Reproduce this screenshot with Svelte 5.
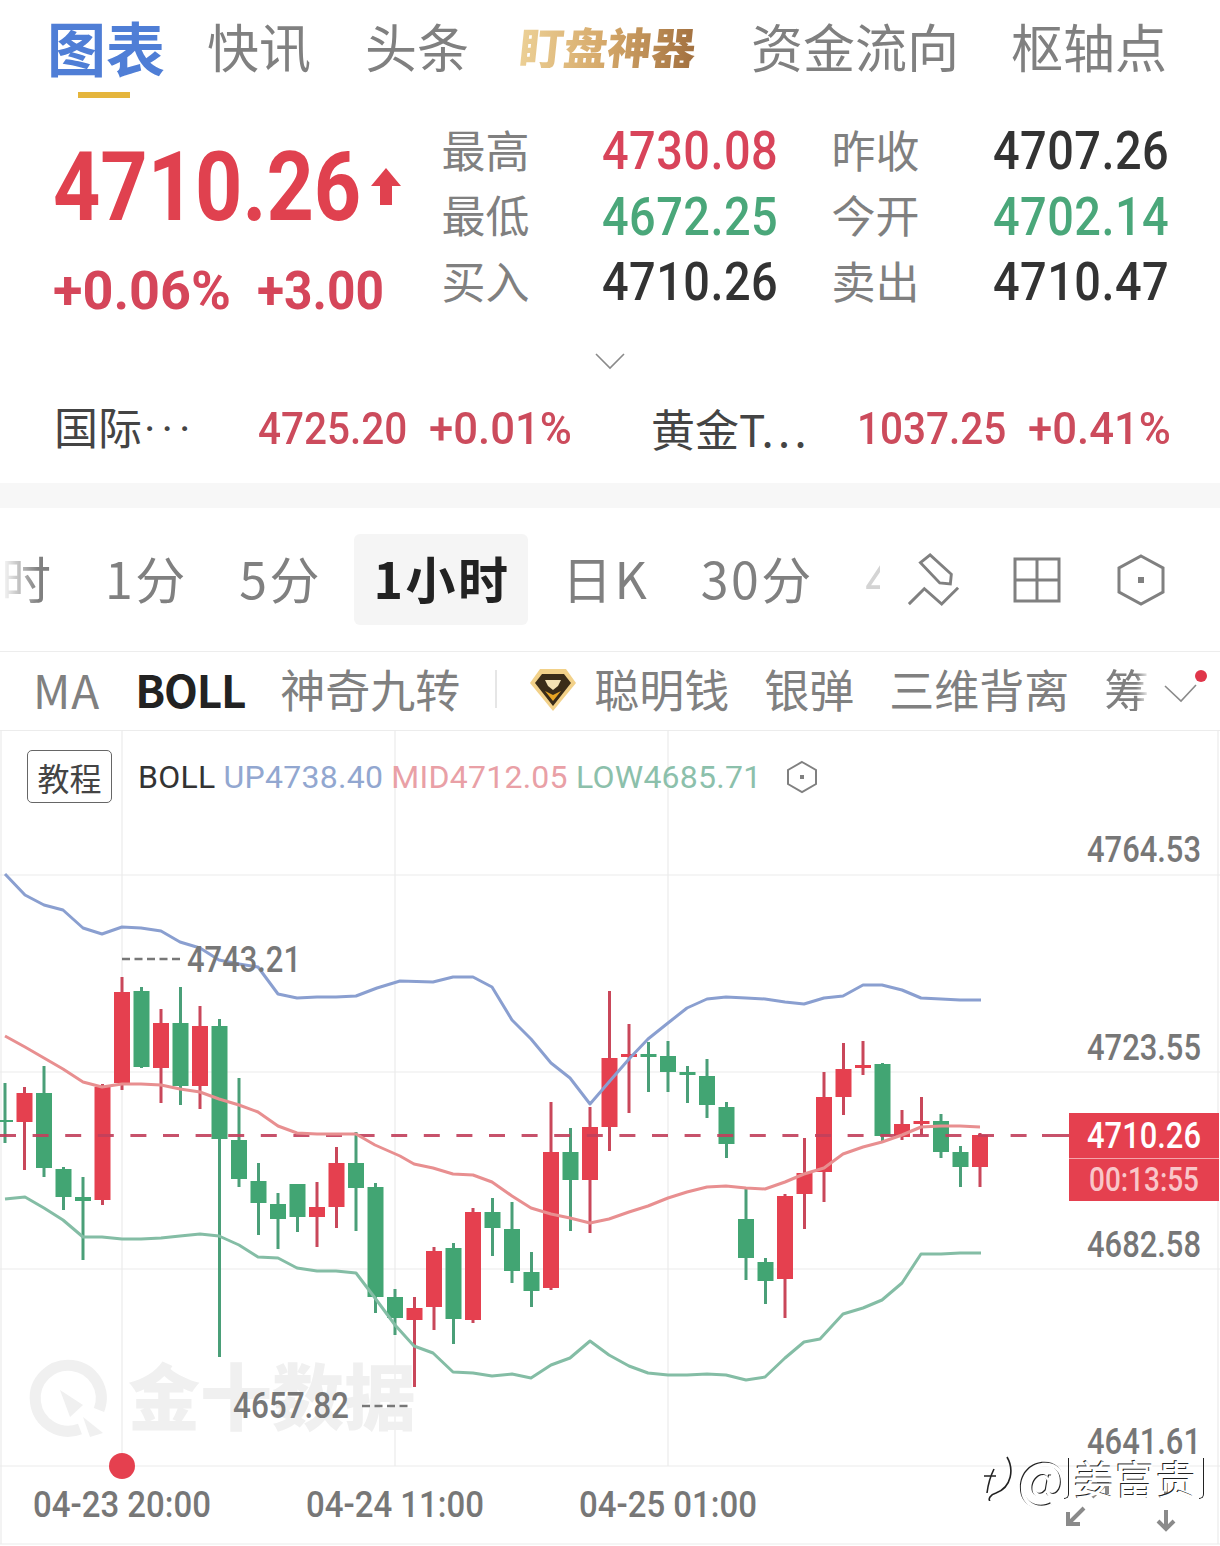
<script>
	// [color, wickTop, bodyTop, bodyBottom, wickBottom]
	const raw = [
		['g',1083,1120,1122,1143],['r',1087,1093,1122,1170],['g',1066,1093,1168,1177],['g',1167,1169,1197,1210],
		['g',1177,1197,1201,1260],['r',1084,1087,1200,1205],['r',977,992,1083,1090],['g',987,991,1067,1068],
		['r',1009,1023,1068,1103],['g',987,1023,1086,1105],['r',1006,1026,1086,1109],['g',1019,1026,1139,1357],
		['g',1078,1140,1179,1187],['g',1163,1181,1203,1235],['g',1193,1204,1219,1249],['g',1184,1184,1217,1232],
		['r',1182,1207,1217,1247],['r',1147,1163,1207,1228],['g',1132,1163,1188,1231],['g',1183,1187,1297,1313],
		['g',1289,1297,1318,1335],['r',1297,1308,1320,1387],['r',1247,1251,1307,1330],['g',1243,1248,1319,1344],
		['r',1208,1212,1320,1323],['g',1198,1212,1228,1256],['g',1202,1229,1271,1283],['g',1252,1272,1291,1307],
		['r',1102,1152,1288,1290],['g',1128,1152,1180,1231],['r',1107,1127,1180,1233],['r',991,1058,1127,1151],
		['r',1024,1054,1057,1113],['g',1042,1054,1057,1092],['g',1041,1056,1072,1092],['g',1066,1072,1075,1103],
		['g',1059,1076,1105,1118],['g',1102,1107,1144,1158],['g',1187,1219,1258,1280],['g',1258,1262,1281,1304],
		['r',1194,1196,1279,1318],['r',1138,1173,1194,1229],['r',1072,1097,1172,1202],['r',1043,1069,1097,1115],
		['r',1041,1065,1068,1075],['g',1063,1064,1136,1143],['r',1110,1124,1137,1140],['r',1097,1121,1124,1135],
		['g',1114,1121,1152,1158],['g',1146,1152,1167,1187],['r',1133,1135,1167,1187]
	];
	const candles = raw.map(([c, wt, bt, bb, wb], i) => ({ c, wt, bt, bb, wb, x: 5 + i * 19.5 }));

	const up = '5,874 25,895 44,905 63,910 83,928 102,934 122,927 141,928 161,931 180,942 200,948 219,960 239,964 258,967 278,994 297,998 317,997 336,997 356,996 377,988 400,981 433,982 453,977 473,977 492,987 512,1020 531,1039 551,1063 570,1078 590,1104 609,1082 629,1059 648,1039 668,1023 687,1008 707,999 726,997 746,998 765,999 785,1002 804,1004 824,998 843,996 863,985 882,985 902,990 921,998 941,999 960,1000 981,1000';
	const mid = '5,1036 25,1047 44,1058 63,1069 83,1082 102,1087 122,1084 141,1084 161,1085 180,1089 200,1092 219,1099 239,1105 258,1112 278,1126 297,1133 317,1134 336,1134 356,1134 375,1145 400,1156 414,1164 433,1168 453,1174 473,1175 492,1182 512,1196 531,1208 551,1214 570,1218 590,1223 609,1219 629,1212 648,1206 668,1198 687,1192 707,1187 726,1186 746,1188 765,1189 785,1182 804,1174 824,1168 843,1154 863,1147 882,1142 902,1135 921,1127 941,1126 960,1126 980,1127';
	const low = '5,1199 25,1197 44,1208 63,1220 83,1237 102,1237 122,1239 141,1239 161,1238 180,1236 200,1234 219,1236 239,1245 258,1257 278,1258 297,1268 317,1271 336,1271 356,1273 375,1298 395,1325 414,1346 433,1353 453,1372 473,1373 492,1376 512,1374 531,1378 551,1365 570,1358 590,1341 609,1355 629,1366 648,1373 668,1375 687,1375 707,1374 726,1375 746,1380 765,1377 785,1358 804,1342 820,1339 843,1314 863,1308 882,1300 902,1283 921,1254 941,1254 960,1253 981,1253';

	const axis = [[849, '4764.53'], [1047, '4723.55'], [1244, '4682.58'], [1441, '4641.61']];
	const dates = [[33, '04-23 20:00'], [306, '04-24 11:00'], [579, '04-25 01:00']];
</script>

<div class="page">
	<nav class="tabs">
		<span class="tab active">图表</span>
		<span class="tab">快讯</span>
		<span class="tab">头条</span>
		<span class="tab gold">盯盘神器</span>
		<span class="tab">资金流向</span>
		<span class="tab pivot">枢轴点</span>
	</nav>

	<section class="quote">
		<div class="headline">
			<div class="price">
				<span class="num big">4710.26</span>
				<svg width="32" height="38" viewBox="0 0 32 38"><path d="M16 0 31 18H22V37H10V18H1Z" fill="#e0414f" /></svg>
			</div>
			<div class="delta">
				<span class="num pct">+0.06%</span>
				<span class="num chg">+3.00</span>
			</div>
		</div>
		<div class="stats">
			<span class="lbl">最高</span><span class="val num red">4730.08</span><span class="lbl">昨收</span><span class="val num">4707.26</span>
			<span class="lbl">最低</span><span class="val num green">4672.25</span><span class="lbl">今开</span><span class="val num green">4702.14</span>
			<span class="lbl">买入</span><span class="val num">4710.26</span><span class="lbl">卖出</span><span class="val num">4710.47</span>
		</div>
	</section>

	<div class="more">
		<svg width="32" height="20" viewBox="0 0 32 20"><path d="M2 3 16 17 30 3" fill="none" stroke="#8a8a8a" stroke-width="1.6" /></svg>
	</div>

	<section class="related">
		<span class="r-name">国际<span class="dots">···</span></span>
		<span class="r-price num">4725.20</span>
		<span class="r-pct num">+0.01%</span>
		<span class="r-name second">黄金T…</span>
		<span class="r-price num">1037.25</span>
		<span class="r-pct num">+0.41%</span>
	</section>

	<div class="band"></div>

	<div class="periods">
		<span class="fade-l">时</span>
		<span>1分</span>
		<span>5分</span>
		<span class="on">1小时</span>
		<span>日K</span>
		<span>30分</span>
		<span class="fade-four">4</span>
		<div class="tools">
			<svg width="54" height="56" viewBox="906 551 56 56" fill="none" stroke="#808080" stroke-width="3">
				<path d="M921 561 931 553 953 573 952 583 941 582Z" />
				<path d="M909 604 925 588 943 604 960 587" />
			</svg>
			<svg width="48" height="46" viewBox="0 0 48 46" fill="none" stroke="#808080" stroke-width="3">
				<rect x="2" y="2" width="44" height="42" />
				<path d="M24 2V44M2 23H46" />
			</svg>
			<svg class="hex" width="48" height="52" viewBox="0 0 48 52" fill="none" stroke="#808080" stroke-width="3">
				<path d="M24 2 46 14V38L24 50 2 38V14Z" />
				<rect x="21" y="23" width="6" height="6" fill="#808080" stroke="none" />
			</svg>
		</div>
	</div>

	<div class="indicators">
		<span class="ma">MA</span>
		<span class="boll">BOLL</span>
		<span>神奇九转</span>
		<i class="sep"></i>
		<span class="smart">
			<svg width="48" height="48" viewBox="0 0 48 48">
				<path d="M11 4H37L47 18 24 46 1 18Z" fill="#f2d189" />
				<path d="M13 9H35L42 18 24 41 6 18Z" fill="#3a2c18" />
				<path d="M24 36 32 26 24 30 16 26Z" fill="#e7a524" />
				<path d="M16 15H32L29 21 24 25 19 21Z" fill="#f5e3b5" />
			</svg>
			聪明钱
		</span>
		<span>银弹</span>
		<span>三维背离</span>
		<span class="fade-r">筹</span>
		<svg class="expand" width="46" height="40" viewBox="0 0 46 40">
			<path d="M2 18 18 33 33 17" fill="none" stroke="#8a8a8a" stroke-width="1.6" />
			<circle cx="38" cy="8" r="6" fill="#e0364a" />
		</svg>
	</div>

	<div class="chart">
		<svg class="plot" width="1220" height="816" viewBox="0 730 1220 816">
			<g class="grid">
				<path d="M0 730.5H1220M0 875H1220M0 1072H1220M0 1269H1220M0 1466H1220M0 1544H1220" />
				<path d="M1 730V1544M122 730V1466M395 730V1466M668 730V1466M1218 730V1544" />
			</g>

			<g class="mark">
				<path d="M80 1429A33 33 0 1 1 99 1410" fill="none" stroke="#f0f0f0" stroke-width="11" />
				<path d="M60 1390 83 1405 70 1417Z M83 1417 103 1433 90 1437Z" fill="#f0f0f0" />
				<text x="128" y="1424">金十数据</text>
			</g>

			{#each candles as k}
				<g class={k.c === 'r' ? 'up' : 'down'}>
					<rect x={k.x - 1.5} y={k.wt} width="3" height={k.wb - k.wt} />
					<rect x={k.x - 8} y={k.bt} width="16" height={k.bb - k.bt} />
				</g>
			{/each}

			<path class="last" d="M0 1135.5H1043" />
			<path class="last solid" d="M1042 1135.5H1069" />

			<polyline class="l-up" points={up} />
			<polyline class="l-mid" points={mid} />
			<polyline class="l-low" points={low} />

			<path class="hl" d="M122 959H183M362 1406H408" />
			<text class="ax" x="187" y="972" textLength="114" lengthAdjust="spacingAndGlyphs">4743.21</text>
			<text class="ax" x="233" y="1418" textLength="116" lengthAdjust="spacingAndGlyphs">4657.82</text>

			{#each axis as [y, t]}
				<text class="ax" x="1087" y={y + 13} textLength="114" lengthAdjust="spacingAndGlyphs">{t}</text>
			{/each}

			{#each dates as [x, t]}
				<text class="ax date" {x} y="1517" textLength="178" lengthAdjust="spacingAndGlyphs">{t}</text>
			{/each}

			<circle cx="122" cy="1466" r="13" fill="#e5404f" />

			<rect x="1069" y="1113" width="150" height="88" fill="#e5404f" />
			<path d="M1069 1158.5H1219" stroke="#f4a5ab" stroke-width="1" />
			<text class="tag" x="1087" y="1148" textLength="114" lengthAdjust="spacingAndGlyphs">4710.26</text>
			<text class="tag dim" x="1089" y="1191" textLength="110" lengthAdjust="spacingAndGlyphs">00:13:55</text>

			<g fill="none" stroke="#8a8a8a" stroke-width="4">
				<path d="M1084 1508 1068 1524M1068 1512V1524H1080" />
				<path d="M1166 1510V1529M1158 1521 1166 1529 1174 1521" />
				<path d="M1092 1497 1106 1484M1097 1484H1107V1494M1166 1483V1494" />
			</g>
		</svg>

		<div class="legend">
			<span class="howto">教程</span>
			<span class="vals">
				<span>BOLL</span> <span class="c-up">UP4738.40</span> <span class="c-mid">MID4712.05</span> <span class="c-low">LOW4685.71</span>
			</span>
			<svg width="32" height="34" viewBox="0 0 32 34" fill="none" stroke="#808080" stroke-width="2">
				<path d="M16 2 30 10V24L16 32 2 24V10Z" />
				<rect x="14" y="15" width="4" height="4" fill="#808080" stroke="none" />
			</svg>
		</div>

		<div class="stamp">
			<svg width="36" height="46" viewBox="0 0 36 46" fill="none" stroke="#222" stroke-width="1.6">
				<path d="M27 2C34 14 32 32 16 38 10 40 8 44 10 46M14 14C10 22 8 30 7 38M4 21H16" />
			</svg>
			<span class="at">@</span>
			<span class="name">姜富贵</span>
		</div>
	</div>
</div>

<style>
	:global(body) { margin: 0; background: #fff; }

	.page {
		width: 1220px;
		height: 1546px;
		overflow: hidden;
		font-family: "Noto Sans CJK SC", "Noto Sans", sans-serif;
		color: #808080;
	}

	/* no DIN around, so Roboto gets squeezed to the same widths */
	.num {
		display: inline-block;
		flex: none;
		font-family: Roboto, sans-serif;
		font-weight: 500;
		white-space: nowrap;
		transform-origin: left center;
	}

	.tabs {
		height: 108px;
		box-sizing: border-box;
		padding: 0 0 16px 47px;
		display: flex;
		align-items: center;
		gap: 54px;
	}

	.tab { font-size: 52px; line-height: 1; white-space: nowrap; }

	.active {
		position: relative;
		margin-right: -12px;
		font-size: 59px;
		font-weight: 700;
		color: #4f7ed6;
	}

	.active::after {
		content: "";
		position: absolute;
		left: 31px;
		bottom: -22px;
		width: 52px;
		height: 6px;
		background: #e5b53c;
	}

	.gold {
		margin: 0 1px 0 -3px;
		font-size: 44px;
		font-weight: 900;
		background: linear-gradient(90deg, #ecd096, #d7ab6c 45%, #a2703f);
		-webkit-background-clip: text;
		background-clip: text;
		color: transparent;
		transform: skewX(-6deg);
	}

	.pivot { margin-left: -2px; }

	.quote {
		display: flex;
		height: 208px;
		padding: 11px 0 0 53px;
	}

	.headline { width: 390px; }

	.price {
		height: 136px;
		display: flex;
		align-items: center;
	}

	.big {
		width: 317px;
		font-size: 96px;
		font-weight: 700;
		line-height: 1;
		color: #e0414f;
		transform: scaleX(.86);
	}

	.delta {
		display: flex;
		margin-top: 4px;
		font-size: 54px;
		line-height: 64px;
		color: #d5465a;
	}

	.delta .num { font-weight: 700; }
	.pct { width: 204px; }
	.chg { transform: scaleX(.92); }

	.stats {
		display: grid;
		grid-template-columns: 159px 231px 160px auto;
		grid-auto-rows: 65.5px;
		align-items: center;
	}

	.lbl { margin-left: -1.5px; font-size: 44px; line-height: 1; padding-bottom: 6px; }

	.val {
		font-size: 53px;
		line-height: 1;
		letter-spacing: .5px;
		color: #333;
		transform: scaleX(.885);
	}

	.red { color: #d8445a; }
	.green { color: #4aa77a; }

	.more {
		height: 40px;
		margin-top: 14px;
		display: flex;
		justify-content: center;
		align-items: center;
	}

	.related {
		height: 102px;
		box-sizing: border-box;
		padding: 0 0 8px 54px;
		display: flex;
		align-items: center;
	}

	.r-name {
		flex: none;
		width: 204px;
		font-size: 44px;
		line-height: 1;
		white-space: nowrap;
		color: #444;
	}

	.r-name.second { width: 206px; }

	.dots { margin-left: 2px; font-family: Roboto, sans-serif; letter-spacing: 6px; }

	.r-price, .r-pct {
		font-size: 45px;
		line-height: 1;
		color: #cc4b5c;
	}

	.r-price { width: 171px; transform: scaleX(.9); }
	.r-pct { width: 222px; transform: scaleX(.97); }

	.band { height: 25px; background: #f7f7f7; }

	.periods {
		height: 144px;
		box-sizing: border-box;
		padding: 0 56px 0 1px;
		border-bottom: 1px solid #ededed;
		display: flex;
		align-items: center;
		gap: 51.5px;
		font-size: 50px;
		line-height: 1;
		letter-spacing: 2.5px;
		white-space: nowrap;
	}

	.periods > span { flex: none; padding-bottom: 6px; }

	.periods > .on {
		margin: 0 -17px 0 -20px;
		padding: 18px 17px 23px 20px;
		border-radius: 6px;
		background: #f5f5f5;
		font-weight: 700;
		color: #222;
	}

	.fade-l {
		-webkit-mask-image: linear-gradient(90deg, transparent, #000 70%);
		mask-image: linear-gradient(90deg, transparent, #000 70%);
	}

	.fade-four {
		width: 15px;
		margin-right: -26px;
		overflow: hidden;
		color: #d4d4d4;
	}

	.tools {
		margin-left: auto;
		display: flex;
		align-items: center;
		gap: 53px;
	}

	.tools svg { display: block; }
	.tools .hex { margin-left: 3px; }

	.indicators {
		height: 78px;
		box-sizing: border-box;
		padding: 0 0 5px 33px;
		display: flex;
		align-items: center;
		gap: 35px;
		font-size: 45px;
		line-height: 1;
		white-space: nowrap;
		position: relative;
	}

	.ma { font-size: 46px; letter-spacing: 1px; }

	.boll { font-size: 44px; font-weight: 700; letter-spacing: -1.2px; color: #222; }

	.sep { width: 2px; height: 38px; background: #e6e6e6; }

	.smart { display: flex; align-items: center; gap: 17px; margin-left: -3px; }

	.fade-r {
		width: 46px;
		-webkit-mask-image: linear-gradient(90deg, #000 70%, transparent);
		mask-image: linear-gradient(90deg, #000 70%, transparent);
	}

	.expand { position: absolute; left: 1163px; top: 16px; }

	.chart { position: relative; height: 816px; }

	.plot { display: block; }

	.grid { fill: none; stroke: #ececec; stroke-width: 1.2; }

	.mark text {
		font-size: 72px;
		font-weight: 900;
		fill: #f0f0f0;
	}

	.up rect { fill: #e5404f; }
	.up rect:first-child { fill: #c9475a; }
	.down rect { fill: #42a573; }
	.down rect:first-child { fill: #4a9f78; }

	.last {
		stroke: #c2405c;
		stroke-width: 3;
		stroke-dasharray: 16 16.6;
		opacity: .9;
	}

	.last.solid { stroke-dasharray: none; }

	polyline { fill: none; stroke-width: 3; stroke-linejoin: round; }

	.l-up { stroke: #8a9fd0; }
	.l-mid { stroke: #e88f90; }
	.l-low { stroke: #84bda5; }

	.hl { stroke: #777; stroke-width: 2.4; stroke-dasharray: 8 4.5; }

	.ax {
		font-family: Roboto, sans-serif;
		font-size: 36px;
		font-weight: 500;
		fill: #777;
	}

	.tag {
		font-family: Roboto, sans-serif;
		font-size: 37px;
		font-weight: 500;
		fill: #fff;
	}

	.tag.dim { font-size: 34px; fill: #f9c6c9; }

	.legend {
		position: absolute;
		left: 27px;
		top: 20px;
		display: flex;
		align-items: center;
	}

	.howto {
		width: 83px;
		height: 51px;
		border: 1px solid #666;
		border-radius: 5px;
		display: flex;
		align-items: center;
		justify-content: center;
		font-size: 32px;
		line-height: 1;
		color: #444;
	}

	.vals {
		margin: 0 25px 0 26px;
		font-family: Roboto, sans-serif;
		font-size: 32px;
		line-height: 1;
		letter-spacing: .25px;
		white-space: nowrap;
		color: #333;
	}

	.legend svg { display: block; }

	.c-up { color: #92a7d0; }
	.c-mid { color: #e9a0a6; }
	.c-low { color: #8cc0ab; }

	.stamp {
		position: absolute;
		left: 980px;
		top: 722px;
		display: flex;
		align-items: center;
		line-height: 1;
		white-space: nowrap;
		color: #fff;
		text-shadow: -1px -1px 0 #222;
	}

	.at { margin-left: 2px; font-size: 52px; }

	.name {
		position: relative;
		margin-left: 3px;
		padding: 0 5px 0 4px;
		font-size: 40px;
		letter-spacing: 1px;
	}

	.name::before, .name::after {
		content: "";
		position: absolute;
		top: 0;
		width: 4px;
		height: 40px;
		border-right: 1.5px solid #222;
		border-bottom: 1.5px solid #222;
		border-bottom-right-radius: 5px;
	}

	.name::before { left: -6px; }
	.name::after { right: -2px; }
</style>
